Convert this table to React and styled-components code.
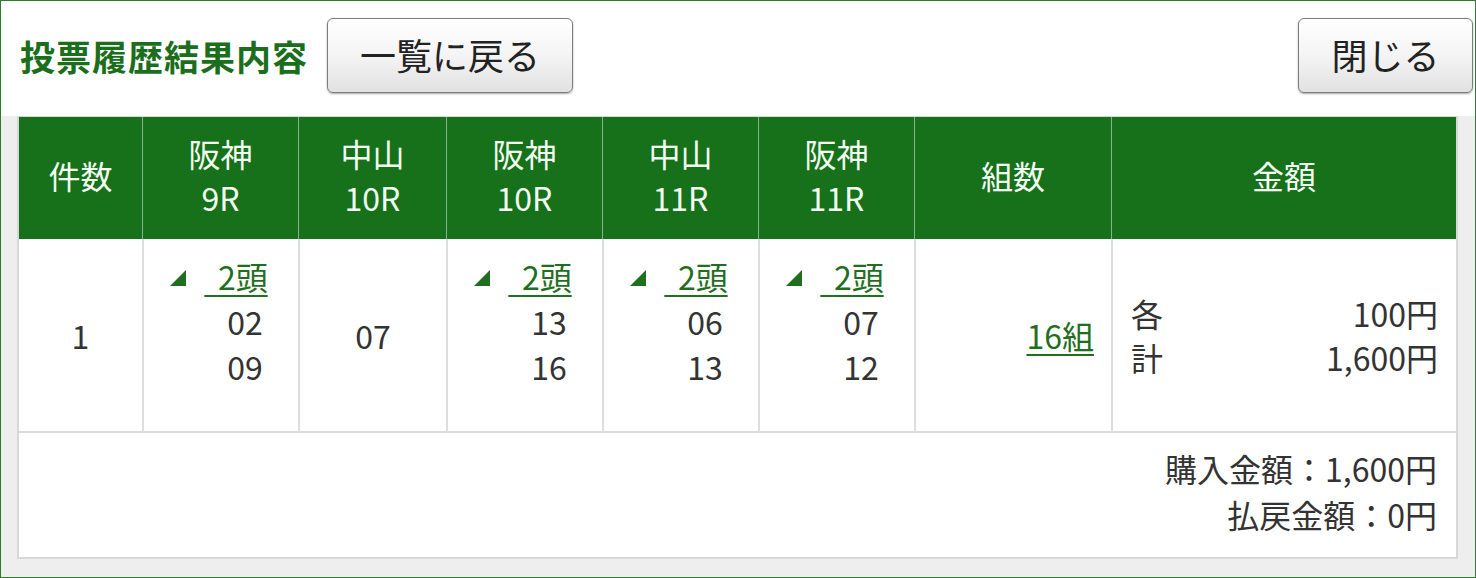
import React from 'react';
import styled, { createGlobalStyle } from 'styled-components';

const GlobalStyle = createGlobalStyle`
  html, body {
    margin: 0;
    padding: 0;
    background: #ffffff;
  }
  body {
    font-family: "Noto Sans CJK JP", "Noto Sans", sans-serif;
    color: #333333;
  }
  * {
    box-sizing: border-box;
  }
`;

const GREEN = '#17701a';

const Frame = styled.div`
  width: 1476px;
  height: 578px;
  border: 1px solid #2c7d2c;
  display: flex;
  flex-direction: column;
  background: #ffffff;
  overflow: hidden;
`;

const Header = styled.header`
  height: 115px;
  display: flex;
  align-items: flex-start;
  padding: 17px 2px 0 19px;
  background: #ffffff;
`;

const Title = styled.h1`
  margin: 0;
  height: 75px;
  display: flex;
  align-items: center;
  font-size: 35px;
  font-weight: 700;
  letter-spacing: 1px;
  color: #1b6e1b;
`;

const Button = styled.button`
  width: ${(p) => p.$width}px;
  height: 75px;
  margin-left: ${(p) => (p.$push ? 'auto' : '19px')};
  border: 1px solid #7d7d7d;
  border-radius: 6px;
  background: linear-gradient(#ffffff 0%, #f4f4f4 50%, #e1e1e1 100%);
  box-shadow: 0 1px 2px rgba(0, 0, 0, 0.35);
  font-family: "Noto Sans CJK JP", sans-serif;
  font-size: 36px;
  color: #222222;
  padding: 0 0 4px;
  cursor: pointer;
`;

const Body = styled.div`
  flex: 1;
  background: #eeeeee;
  padding: 0 17px 18px 16px;
`;

const Card = styled.div`
  background: #ffffff;
  border: 2px solid #d8d8d8;
  border-top-width: 1px;
`;

const COLS = '123px 156px 148px 156px 156px 156px 197px 1fr';

const HeadRow = styled.div`
  display: grid;
  grid-template-columns: ${COLS};
  background: ${GREEN};
  height: 122px;
`;

const HeadCell = styled.div`
  display: flex;
  flex-direction: column;
  align-items: center;
  justify-content: center;
  padding-bottom: 6px;
  color: #f2fff2;
  font-size: 32px;
  line-height: 44px;
  border-left: ${(p) => (p.$first ? 'none' : '1px solid #86b486')};
`;

const BodyRow = styled.div`
  display: grid;
  grid-template-columns: ${COLS};
  height: 194px;
  border-bottom: 2px solid #dddddd;
`;

const Cell = styled.div`
  display: flex;
  align-items: ${(p) => (p.$top ? 'flex-start' : 'center')};
  justify-content: ${(p) => p.$justify || 'center'};
  padding: ${(p) => p.$pad || '0'};
  border-left: ${(p) => (p.$first ? 'none' : '2px solid #dddddd')};
  font-size: 32px;
  line-height: 45px;
  color: #333333;
`;

const Horses = styled.div`
  display: flex;
  flex-direction: column;
  align-items: flex-end;
  padding-right: 4px;
`;

const HorseHead = styled.div`
  display: flex;
  align-items: center;
`;

const Tri = styled.svg`
  width: 16px;
  height: 16px;
  margin-right: 18px;
  margin-top: 2px;
`;

const GreenLink = styled.a`
  color: #1f6f1f;
  text-decoration: underline;
  text-decoration-thickness: 2px;
  text-underline-offset: 5px;
`;

const Num = styled.span`
  padding-right: 5px;
`;

const Money = styled.div`
  width: 100%;
  display: grid;
  grid-template-columns: auto 1fr;
  line-height: 44px;
`;

const MoneyValue = styled.span`
  text-align: right;
`;

const SumRow = styled.div`
  height: 124px;
  padding: 12px 19px 0 0;
  display: flex;
  flex-direction: column;
  align-items: flex-end;
  font-size: 32px;
  line-height: 46px;
  color: #333333;
`;

const heads = [
  ['件数'],
  ['阪神', '9R'],
  ['中山', '10R'],
  ['阪神', '10R'],
  ['中山', '11R'],
  ['阪神', '11R'],
  ['組数'],
  ['金額'],
];

const Triangle = () => (
  <Tri viewBox="0 0 16 16">
    <polygon points="16,0 16,16 0,16" fill="#1f6f1f" />
  </Tri>
);

const HorseCell = ({ nums }) => (
  <Cell $top $pad="15px 0 0">
    <Horses>
      <HorseHead>
        <Triangle />
        <GreenLink href="#">{'\u00a0\u2009'}2頭</GreenLink>
      </HorseHead>
      {nums.map((n) => (
        <Num key={n}>{n}</Num>
      ))}
    </Horses>
  </Cell>
);

export default function App() {
  return (
    <>
      <GlobalStyle />
      <Frame>
        <Header>
          <Title>投票履歴結果内容</Title>
          <Button $width={246}>一覧に戻る</Button>
          <Button $width={175} $push>
            閉じる
          </Button>
        </Header>
        <Body>
          <Card>
            <HeadRow>
              {heads.map((lines, i) => (
                <HeadCell key={i} $first={i === 0}>
                  {lines.map((l) => (
                    <span key={l}>{l}</span>
                  ))}
                </HeadCell>
              ))}
            </HeadRow>
            <BodyRow>
              <Cell $first>1</Cell>
              <HorseCell nums={['02', '09']} />
              <Cell>07</Cell>
              <HorseCell nums={['13', '16']} />
              <HorseCell nums={['06', '13']} />
              <HorseCell nums={['07', '12']} />
              <Cell $justify="flex-end" $pad="0 17px 0 0">
                <GreenLink href="#">16組</GreenLink>
              </Cell>
              <Cell $pad="0 18px 0 18px">
                <Money>
                  <span>各</span>
                  <MoneyValue>100円</MoneyValue>
                  <span>計</span>
                  <MoneyValue>1,600円</MoneyValue>
                </Money>
              </Cell>
            </BodyRow>
            <SumRow>
              <span>購入金額：1,600円</span>
              <span>払戻金額：0円</span>
            </SumRow>
          </Card>
        </Body>
      </Frame>
    </>
  );
}
